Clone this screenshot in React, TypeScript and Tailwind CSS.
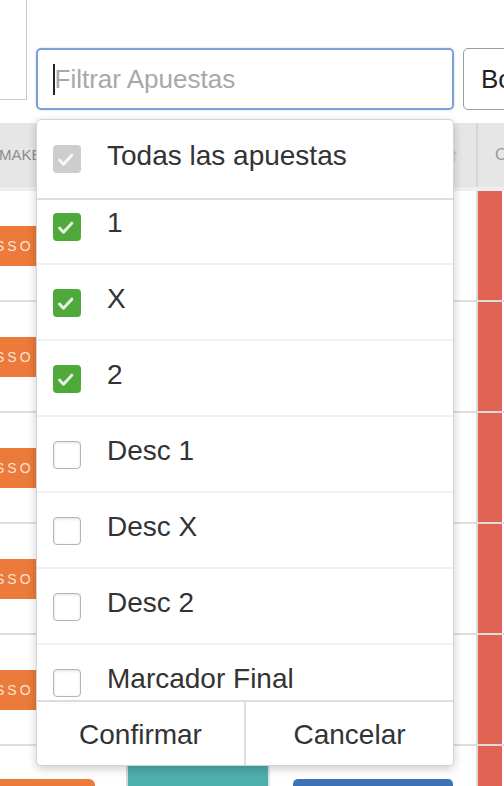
import React from "react";

type BoxState = "gray" | "green" | "empty";

function Check() {
  return (
    <svg width="28" height="28" viewBox="0 0 28 28">
      <polyline
        points="6.5,15 10.5,19.2 18.8,10.2"
        fill="none"
        stroke="white"
        strokeOpacity="0.85"
        strokeWidth="3"
        strokeLinecap="round"
        strokeLinejoin="round"
      />
    </svg>
  );
}

function Box({ state }: { state: BoxState }) {
  if (state === "gray")
    return (
      <div className="w-[28px] h-[28px] shrink-0 rounded-[4px] bg-[#cdcdcd]">
        <Check />
      </div>
    );
  if (state === "green")
    return (
      <div className="w-[28px] h-[28px] shrink-0 rounded-[4px] bg-[#4ea93a]">
        <Check />
      </div>
    );
  return (
    <div className="w-[28px] h-[28px] shrink-0 rounded-[4px] border-[1.5px] border-[#b4b4b4] bg-white shadow-[inset_0_1px_3px_rgba(0,0,0,0.12)]" />
  );
}

const items: { label: string; state: BoxState }[] = [
  { label: "1", state: "green" },
  { label: "X", state: "green" },
  { label: "2", state: "green" },
  { label: "Desc 1", state: "empty" },
  { label: "Desc X", state: "empty" },
  { label: "Desc 2", state: "empty" },
  { label: "Marcador Final", state: "empty" },
  { label: "Ambos Marcan", state: "empty" },
];

function Row({ last }: { last?: boolean }) {
  return (
    <div className="flex h-[111px] shrink-0 border-b-2 border-[#dedede]">
      <div className="w-[126px] shrink-0">
        {last ? (
          <div className="mt-[33px] h-[40px] w-[95px] rounded-tr-[6px] bg-[#ec7a3a]" />
        ) : (
          <div className="mt-[35px] h-[40px] w-[95px] bg-[#ec7a3a] flex items-center overflow-hidden">
            <span className="ml-[-5px] text-[14px] tracking-[3px] text-[#fbe3d4] leading-none whitespace-nowrap">
              SSO
            </span>
          </div>
        )}
      </div>
      <div className="w-[142px] shrink-0 border-l-2 border-[#d8d8d8]">
        {last && <div className="h-full w-full bg-[#4eaeab]" />}
      </div>
      <div className="w-[186px] shrink-0 border-l-2 border-[#e4e4e4]">
        {last && (
          <div className="ml-[23px] mt-[33px] h-[40px] w-[160px] rounded-t-[5px] bg-[#3d72b6]" />
        )}
      </div>
      <div className="w-[22px] shrink-0" />
      <div className="w-[26px] shrink-0 border-l-2 border-[#dcdcdc] bg-[#e06354]" />
    </div>
  );
}

export default function App() {
  return (
    <div className="relative w-[504px] h-[786px] overflow-hidden bg-white font-['Liberation_Sans',Arial,sans-serif]">
      {/* top bar */}
      <div className="flex h-[123px]">
        <div className="w-[27px] h-[100px] shrink-0 border-r border-b border-[#c9c9c9]" />
        <div className="ml-[9px] mt-[48px] h-[62px] w-[418px] shrink-0 rounded-[5px] border-2 border-[#7f9fd8] flex items-center pl-[15px] shadow-[0_0_2px_rgba(90,130,210,0.4)]">
          <span className="h-[31px] w-[1.5px] bg-[#222]" />
          <span className="text-[26px] text-[#a8a8a8] leading-none">Filtrar Apuestas</span>
        </div>
        <div className="ml-[9px] mt-[48px] h-[62px] w-[120px] shrink-0 rounded-[5px] border-[1.5px] border-[#9c9c9c] flex items-center pl-[17px]">
          <span className="text-[26px] text-[#222] leading-none">Borrar</span>
        </div>
      </div>

      {/* table header */}
      <div className="flex h-[68px] bg-[#e6e6e6] border-b-4 border-[#eeeeee]">
        <div className="w-[454px] shrink-0 flex items-center">
          <span className="ml-[-1px] text-[15px] text-[#8c8c8c] whitespace-nowrap">MAKER</span>
        </div>
        <div className="w-[22px] shrink-0 flex items-center">
          <span className="ml-[-4px] text-[18px] text-[#bdbdbd]">↑</span>
        </div>
        <div className="w-[28px] shrink-0 border-l-2 border-[#d6d6d6] flex items-center">
          <span className="ml-[17px] text-[17px] text-[#9a9a9a]">C</span>
        </div>
      </div>

      {/* rows */}
      <div className="flex flex-col">
        <Row />
        <Row />
        <Row />
        <Row />
        <Row />
        <Row last />
      </div>

      {/* dropdown overlay */}
      <div className="absolute left-[36px] top-[119px] w-[418px] h-[647px] rounded-[5px] border border-[#d4d4d4] bg-white shadow-[0_3px_10px_rgba(0,0,0,0.2)] flex flex-col overflow-hidden text-[#333]">
        <div className="h-[80px] shrink-0 border-b-2 border-[#dddddd] flex items-start pl-[16px] pt-[20px]">
          <div className="mt-[5px]">
            <Box state="gray" />
          </div>
          <span className="ml-[26px] text-[28px] leading-[32px]">Todas las apuestas</span>
        </div>
        <div className="h-[500px] shrink-0 overflow-hidden">
          <div className="mt-[-11px] flex flex-col">
            {items.map((it) => (
              <div
                key={it.label}
                className="h-[76px] shrink-0 border-b-2 border-[#f1f1f1] flex items-start pl-[16px] pt-[18px]"
              >
                <div className="mt-[6px]">
                  <Box state={it.state} />
                </div>
                <span className="ml-[26px] text-[28px] leading-[32px]">{it.label}</span>
              </div>
            ))}
          </div>
        </div>
        <div className="flex flex-1 border-t-2 border-[#dddddd]">
          <div className="flex-1 flex items-center justify-center text-[28px] pt-[2px]">Confirmar</div>
          <div className="flex-1 flex items-center justify-center text-[28px] pt-[2px] border-l-2 border-[#dddddd]">
            Cancelar
          </div>
        </div>
      </div>
    </div>
  );
}
